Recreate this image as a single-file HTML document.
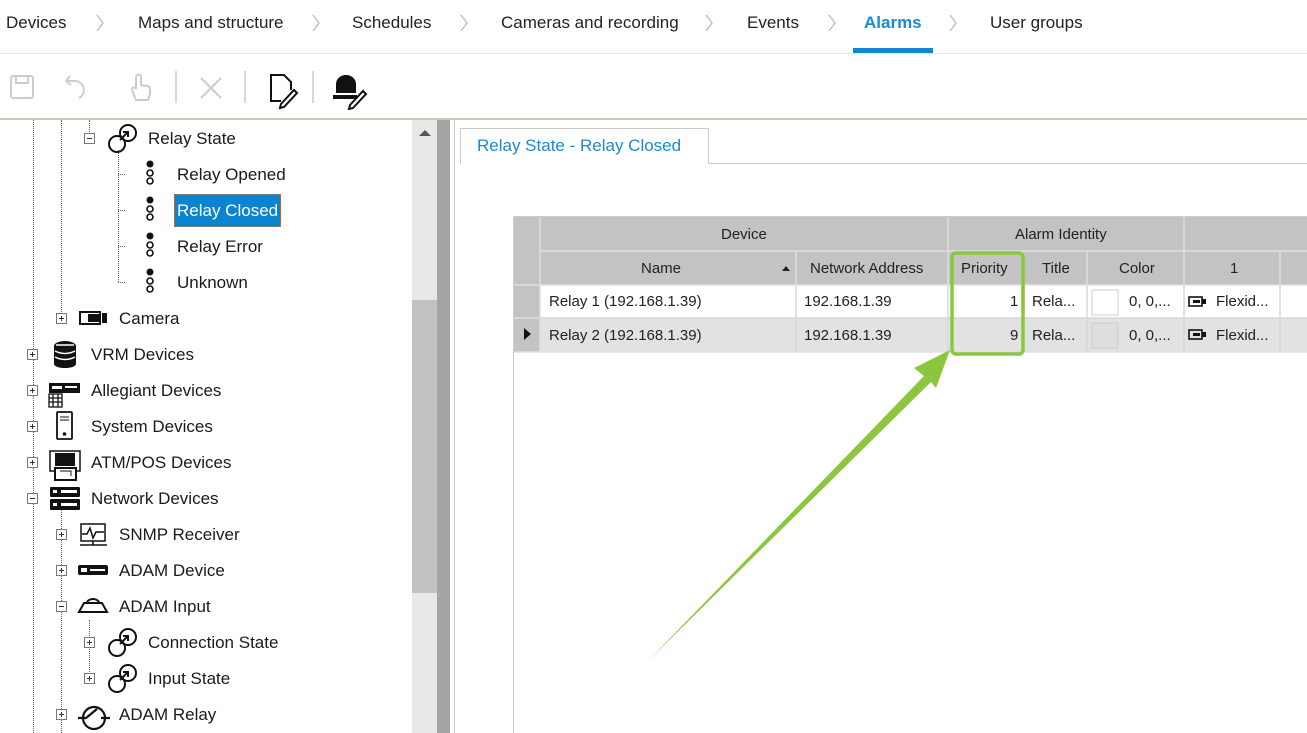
<!DOCTYPE html>
<html><head><meta charset="utf-8"><style>
*{margin:0;padding:0;box-sizing:border-box}
body{width:1307px;height:733px;overflow:hidden;background:#fff;font-family:"Liberation Sans",sans-serif;position:relative;color:#222}
.a{position:absolute;white-space:nowrap}
.nav{font-size:17px;top:13px;color:#222}
.t{font-size:17px;color:#1a1a1a}
.exp{position:absolute;width:11px;height:11px;border:1px solid #777;background:#fff}
.exp:before{content:"";position:absolute;left:2px;top:4px;width:5px;height:1px;background:#333}
.exp.p:after{content:"";position:absolute;left:4px;top:2px;width:1px;height:5px;background:#333}
.vd{position:absolute;border-left:1px dotted #666}
.hd{position:absolute;border-top:1px dotted #666;width:7px}
.c{position:absolute;font-size:15px;color:#222;display:flex;align-items:center;height:100%}
</style></head><body>
<!-- nav -->
<svg class="a" style="left:0;top:0" width="1000" height="50"><g fill="none" stroke="#bbb" stroke-width="1.3">
<path d="M97 15 l6 8 -6 8 M313 15 l6 8 -6 8 M461 15 l6 8 -6 8 M706 15 l6 8 -6 8 M829 15 l6 8 -6 8 M950 15 l6 8 -6 8"/></g></svg>
<div class="a nav" style="left:6px">Devices</div>
<div class="a nav" style="left:138px">Maps and structure</div>
<div class="a nav" style="left:352px">Schedules</div>
<div class="a nav" style="left:501px">Cameras and recording</div>
<div class="a nav" style="left:747px">Events</div>
<div class="a nav" style="left:864px;color:#1a8ad4;font-weight:bold">Alarms</div>
<div class="a nav" style="left:990px">User groups</div>
<div class="a" style="left:853px;top:48px;width:80px;height:5px;background:#0f87d0"></div>
<div class="a" style="left:0;top:53px;width:1307px;height:1px;background:#e6e6dc"></div>
<!-- toolbar -->
<svg class="a" style="left:0;top:66px" width="380" height="44">
<g fill="none" stroke="#ccc" stroke-width="2">
<rect x="11" y="10" width="22" height="22" rx="2"/><rect x="16" y="10" width="12" height="7"/>
<path d="M70 10 l-4 5 5 4 M67 15 h8 a9 9 0 0 1 4 17"/>
<path d="M136 34 l-4 -10 a2 2 0 0 1 4 -1 v-12 a2.5 2.5 0 0 1 5 0 v8 l6 1 a3 3 0 0 1 3 3 v5 l-2 6 z"/>
<path d="M201 12 l20 20 M221 12 l-20 20"/>
</g>
<path d="M176 5 v32 M245 5 v32 M313 5 v32" stroke="#ccc" stroke-width="1.5"/>
<g fill="none" stroke="#111" stroke-width="2">
<path d="M281 35 h-10 v-26 h13 l7 7 v8"/><path d="M281 38 l13 -14 3 3 -13 14 -4 1 z"/>
</g>
<path d="M336 27 v-9 a10 9 0 0 1 20 0 v9 z" fill="#111"/><rect x="333" y="29" width="24" height="4" fill="#111"/>
<path d="M350 39 l13 -14 3 3 -13 14 -4 1 z" fill="#fff" stroke="#111" stroke-width="2"/>
</svg>
<div class="a" style="left:0;top:118px;width:1307px;height:2px;background:#ccc8b4"></div>
<!-- left tree -->
<div class="vd" style="left:33px;top:120px;height:613px"></div>
<div class="vd" style="left:61px;top:120px;height:200px"></div>
<div class="vd" style="left:61px;top:510px;height:223px"></div>
<div class="vd" style="left:89px;top:120px;height:12px"></div>
<div class="vd" style="left:89px;top:620px;height:60px"></div>
<div class="vd" style="left:118px;top:150px;height:132px"></div>
<div class="hd" style="left:118px;top:174px"></div><div class="hd" style="left:118px;top:210px"></div><div class="hd" style="left:118px;top:246px"></div><div class="hd" style="left:118px;top:282px"></div>
<div class="exp" style="left:84px;top:133px"></div>
<div class="exp p" style="left:56px;top:313px"></div>
<div class="exp p" style="left:27px;top:349px"></div>
<div class="exp p" style="left:27px;top:385px"></div>
<div class="exp p" style="left:27px;top:421px"></div>
<div class="exp p" style="left:27px;top:457px"></div>
<div class="exp" style="left:27px;top:493px"></div>
<div class="exp p" style="left:56px;top:529px"></div>
<div class="exp p" style="left:56px;top:565px"></div>
<div class="exp" style="left:56px;top:601px"></div>
<div class="exp p" style="left:84px;top:637px"></div>
<div class="exp p" style="left:84px;top:673px"></div>
<div class="exp p" style="left:56px;top:709px"></div>
<svg class="a" style="left:0;top:120px" width="170" height="613">
<g fill="none" stroke="#111" stroke-width="2">
<circle cx="117" cy="24" r="8"/><circle cx="128" cy="13" r="8"/><path d="M120 20 l8 -8 M123 12 h5 v5"/>
<circle cx="117" cy="528" r="8"/><circle cx="128" cy="517" r="8"/><path d="M120 524 l8 -8 M123 516 h5 v5"/>
<circle cx="117" cy="564" r="8"/><circle cx="128" cy="553" r="8"/><path d="M120 560 l8 -8 M123 552 h5 v5"/>
</g>
<g fill="#111"><circle cx="150" cy="44" r="3.5"/><circle cx="150" cy="80" r="3.5"/><circle cx="150" cy="116" r="3.5"/><circle cx="150" cy="152" r="3.5"/></g>
<g fill="none" stroke="#111" stroke-width="1.6">
<circle cx="150" cy="53" r="3"/><circle cx="150" cy="61" r="3"/>
<circle cx="150" cy="89" r="3"/><circle cx="150" cy="97" r="3"/>
<circle cx="150" cy="125" r="3"/><circle cx="150" cy="133" r="3"/>
<circle cx="150" cy="161" r="3"/><circle cx="150" cy="169" r="3"/>
</g>
<rect x="80" y="192" width="20" height="12" fill="none" stroke="#111" stroke-width="2"/><rect x="88" y="194" width="12" height="8" fill="#111"/><rect x="102" y="193" width="5" height="10" fill="#111"/>
<g fill="#111"><ellipse cx="65" cy="226" rx="11" ry="5"/><rect x="54" y="226" width="22" height="18"/><ellipse cx="65" cy="244" rx="11" ry="4"/></g>
<g stroke="#fff" stroke-width="1.5" fill="none"><path d="M55 231 q10 5 20 0 M55 237 q10 5 20 0 M56 225 h18"/></g>
<rect x="49" y="263" width="31" height="10" fill="#111"/><rect x="52" y="266" width="10" height="3" fill="#fff"/><rect x="65" y="266" width="12" height="2" fill="#fff"/>
<g fill="none" stroke="#111" stroke-width="1.3"><rect x="49" y="274" width="13" height="13"/><path d="M49 278 h13 M49 282 h13 M53 274 v13 M58 274 v13"/></g>
<rect x="57" y="292" width="15" height="27" rx="1" fill="none" stroke="#111" stroke-width="1.8"/><path d="M60 297 h9 M60 300 h9" stroke="#111"/><circle cx="64.5" cy="314" r="1.8" fill="#111"/>
<rect x="50" y="331" width="30" height="20" fill="none" stroke="#111" stroke-width="1.5"/><rect x="55" y="333" width="20" height="13" fill="#111"/>
<rect x="55" y="348" width="21" height="12" fill="#fff" stroke="#111" stroke-width="2"/><path d="M60 351 h11 v5" stroke="#111" fill="none"/>
<rect x="50" y="367" width="30" height="10" rx="1" fill="#111"/><rect x="50" y="379" width="30" height="11" rx="1" fill="#111"/>
<g fill="#fff"><rect x="53" y="370" width="4" height="3"/><rect x="61" y="370" width="16" height="3"/><rect x="53" y="383" width="4" height="3"/><rect x="61" y="383" width="16" height="3"/></g>
<rect x="81" y="404" width="24" height="17" fill="none" stroke="#111" stroke-width="1.5"/><path d="M82 414 h5 l3 -6 3 10 3 -6 h8 M80 425 h27 M93 421 v4" fill="none" stroke="#111" stroke-width="1.5"/>
<rect x="78" y="445" width="30" height="10" rx="2" fill="#111"/><rect x="81" y="448" width="6" height="4" fill="#fff"/><rect x="90" y="449" width="15" height="2" fill="#fff"/>
<path d="M79 492 h28 l-5 -9 h-18 z M87 483 a6 4 0 0 1 12 0 M93 478 v1" fill="none" stroke="#111" stroke-width="2"/>
<circle cx="94" cy="598" r="11" fill="none" stroke="#111" stroke-width="2.2"/><path d="M78 598 h8 l11 -9 M101 598 h9" fill="none" stroke="#111" stroke-width="2.2"/>
</svg>
<div class="a t" style="left:148px;top:129px">Relay State</div>
<div class="a t" style="left:177px;top:165px">Relay Opened</div>
<div class="a" style="left:174px;top:194px;width:107px;height:33px;background:#0a84d0;border:1px dotted #e07a2a"></div>
<div class="a t" style="left:177px;top:201px;color:#fff">Relay Closed</div>
<div class="a t" style="left:177px;top:237px">Relay Error</div>
<div class="a t" style="left:177px;top:273px">Unknown</div>
<div class="a t" style="left:119px;top:309px">Camera</div>
<div class="a t" style="left:91px;top:345px">VRM Devices</div>
<div class="a t" style="left:91px;top:381px">Allegiant Devices</div>
<div class="a t" style="left:91px;top:417px">System Devices</div>
<div class="a t" style="left:91px;top:453px">ATM/POS Devices</div>
<div class="a t" style="left:91px;top:489px">Network Devices</div>
<div class="a t" style="left:119px;top:525px">SNMP Receiver</div>
<div class="a t" style="left:119px;top:561px">ADAM Device</div>
<div class="a t" style="left:119px;top:597px">ADAM Input</div>
<div class="a t" style="left:148px;top:633px">Connection State</div>
<div class="a t" style="left:148px;top:669px">Input State</div>
<div class="a t" style="left:119px;top:705px">ADAM Relay</div>
<div class="a" style="left:412px;top:120px;width:25px;height:613px;background:#e8e8e8"></div>
<div class="a" style="left:412px;top:300px;width:25px;height:293px;background:#c2c2c2"></div>
<div class="a" style="left:419px;top:130px;width:0;height:0;border-left:6px solid transparent;border-right:6px solid transparent;border-bottom:6px solid #555"></div>
<div class="a" style="left:437px;top:120px;width:13px;height:613px;background:#a5a5a5"></div>
<div class="a" style="left:454px;top:120px;width:1px;height:613px;background:#ccc"></div>
<div class="a" style="left:460px;top:128px;width:249px;height:36px;border:1px solid #ccc;border-bottom:none;background:#fff"></div>
<div class="a" style="left:708px;top:163px;width:599px;height:1px;background:#ccc"></div>
<div class="a" style="left:477px;top:136px;font-size:17px;color:#1a8ad4">Relay State - Relay Closed</div>
<div class="a" style="left:513px;top:216px;width:794px;height:517px;border-left:1px solid #ccc;border-top:1px solid #ccc"></div>
<div class="a" style="left:514px;top:217px;width:793px;height:68px;background:#c3c3c3"></div>
<div class="a" style="left:514px;top:285px;width:26px;height:67px;background:#c3c3c3"></div>
<div class="a" style="left:540px;top:285px;width:767px;height:33px;background:#fff"></div>
<div class="a" style="left:540px;top:318px;width:767px;height:34px;background:#e2e2e2"></div>
<svg class="a" style="left:514px;top:217px" width="793" height="136">
<g stroke="#e0e0e0" stroke-width="1.5">
<path d="M26 34 H793 M0 68 H793 M0 101 H793 M0 135 H793"/>
<path d="M26 0 V135 M434 0 V135 M670 0 V135 M282 34 V135 M508 34 V135 M573 34 V135 M766 34 V135"/>
</g>
<g stroke="#d4d4d4"><path d="M26 101 H793 M282 68 V135 M434 68 V135 M508 68 V135 M573 68 V135 M670 68 V135 M766 68 V135"/></g>
<rect x="578" y="73" width="26" height="25" fill="#fff" stroke="#ccc"/>
<rect x="578" y="106" width="26" height="25" fill="#dedede" stroke="#ccc"/>
<path d="M10 111 l7 6 -7 6z" fill="#111"/>
<path d="M268 54 l4 -5 4 5z" fill="#222"/>
<g fill="none" stroke="#111" stroke-width="1.6"><rect x="675" y="80" width="13" height="9"/><rect x="675" y="113" width="13" height="9"/></g>
<g fill="#111"><rect x="688" y="82" width="4" height="5"/><rect x="688" y="115" width="4" height="5"/><rect x="679" y="83" width="7" height="3"/><rect x="679" y="116" width="7" height="3"/></g>
</svg>
<div class="a" style="left:540px;top:217px;width:408px;height:34px"><div class="c" style="left:181px">Device</div></div>
<div class="a" style="left:948px;top:217px;width:236px;height:34px"><div class="c" style="left:67px">Alarm Identity</div></div>
<div class="a" style="left:0;top:251px;height:34px;width:1307px">
<div class="c" style="left:641px">Name</div><div class="c" style="left:810px">Network Address</div>
<div class="c" style="left:961px">Priority</div><div class="c" style="left:1042px">Title</div>
<div class="c" style="left:1119px">Color</div><div class="c" style="left:1230px">1</div></div>
<div class="a" style="left:0;top:285px;height:33px;width:1307px">
<div class="c" style="left:549px">Relay 1 (192.168.1.39)</div><div class="c" style="left:804px">192.168.1.39</div>
<div class="c" style="left:1010px">1</div><div class="c" style="left:1032px">Rela...</div>
<div class="c" style="left:1129px">0, 0,...</div><div class="c" style="left:1216px">Flexid...</div></div>
<div class="a" style="left:0;top:318px;height:34px;width:1307px">
<div class="c" style="left:549px">Relay 2 (192.168.1.39)</div><div class="c" style="left:804px">192.168.1.39</div>
<div class="c" style="left:1010px">9</div><div class="c" style="left:1032px">Rela...</div>
<div class="c" style="left:1129px">0, 0,...</div><div class="c" style="left:1216px">Flexid...</div></div>
<svg class="a" style="left:0;top:0" width="1307" height="733">
<rect x="952" y="253" width="71" height="101" rx="4" fill="none" stroke="#8cc63f" stroke-width="3.5"/>
<path d="M648 661 L924 376 L914 368 L950 350 L936 388 L931 382 Z" fill="#8cc63f"/>
</svg>
</body></html>
